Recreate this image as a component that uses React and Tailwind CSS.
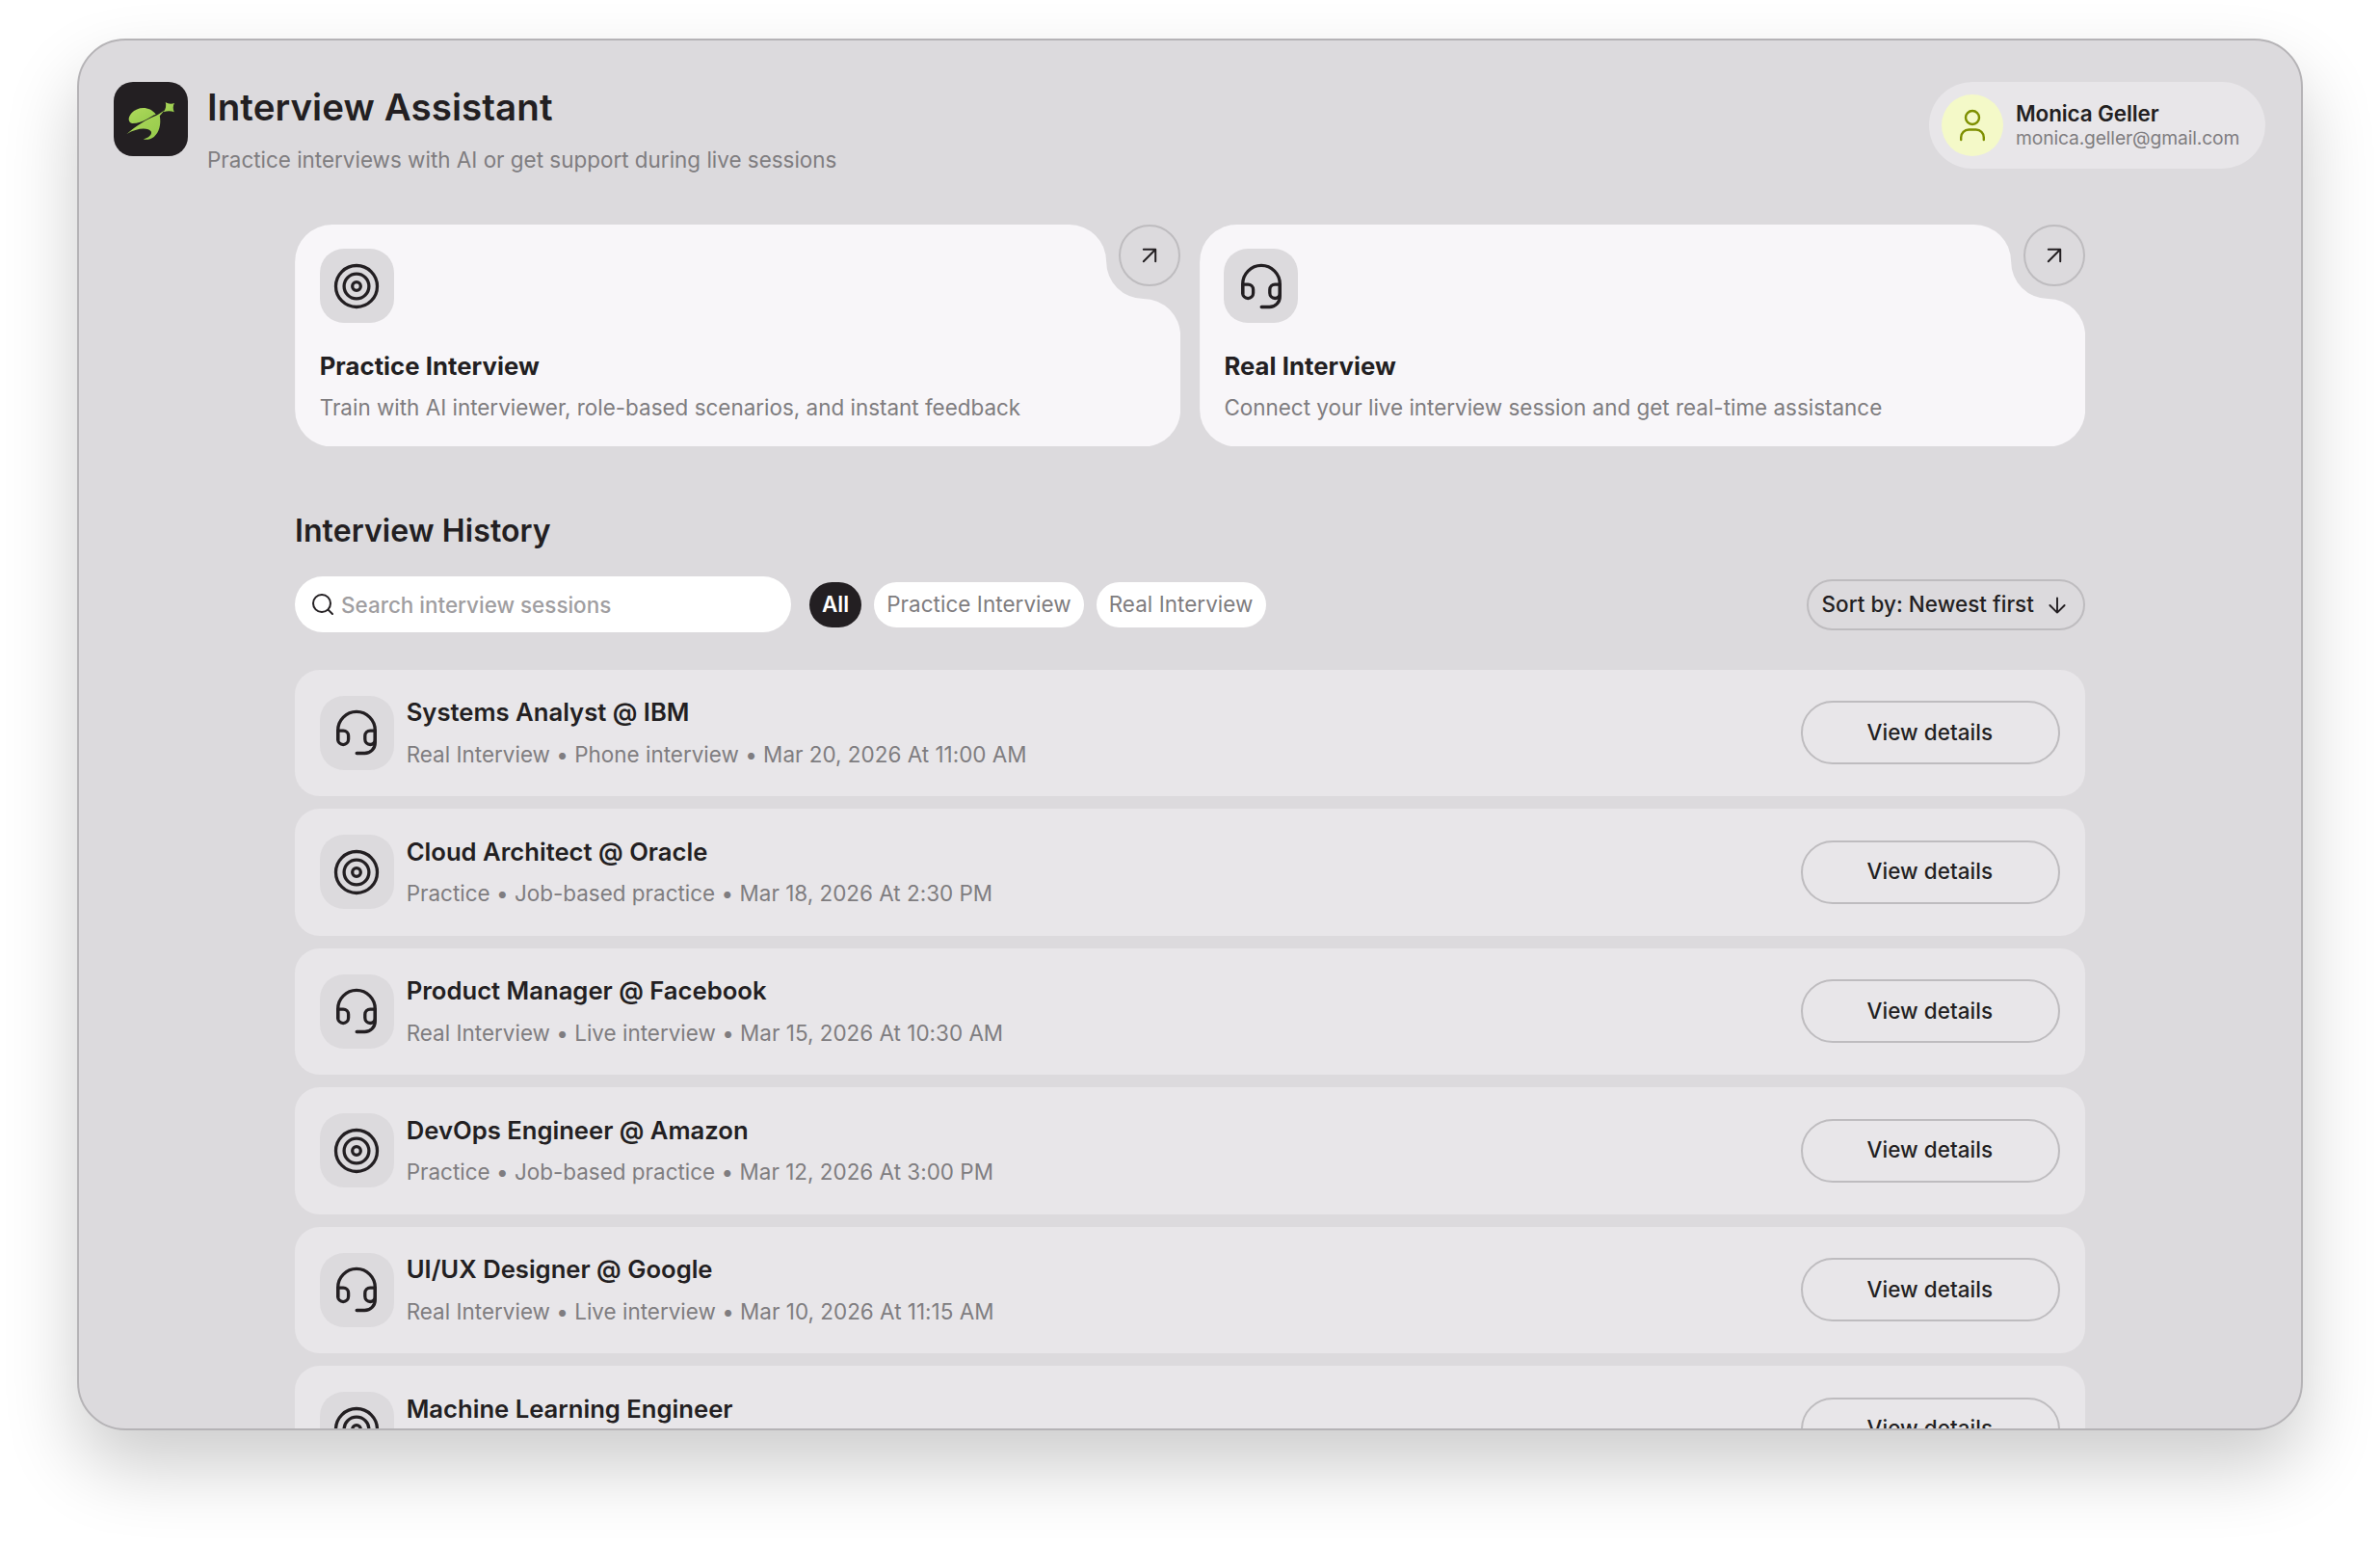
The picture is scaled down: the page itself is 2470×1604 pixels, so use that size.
import React from 'react'
import clsx from 'clsx'

const sessions = [
  { type: 'real', title: 'Systems Analyst @ IBM', meta: 'Real Interview • Phone interview • Mar 20, 2026 At 11:00 AM' },
  { type: 'practice', title: 'Cloud Architect @ Oracle', meta: 'Practice • Job-based practice • Mar 18, 2026 At 2:30 PM' },
  { type: 'real', title: 'Product Manager @ Facebook', meta: 'Real Interview • Live interview • Mar 15, 2026 At 10:30 AM' },
  { type: 'practice', title: 'DevOps Engineer @ Amazon', meta: 'Practice • Job-based practice • Mar 12, 2026 At 3:00 PM' },
  { type: 'real', title: 'UI/UX Designer @ Google', meta: 'Real Interview • Live interview • Mar 10, 2026 At 11:15 AM' },
  { type: 'practice', title: 'Machine Learning Engineer', meta: '' },
]

const filters = ['All', 'Practice Interview', 'Real Interview']

function Logo() {
  return (
    <div className="h-[77px] w-[77px] shrink-0 rounded-[20px] bg-[#231f22]">
      <svg viewBox="55 44 232 231" className="h-full w-full">
        <defs>
          <linearGradient id="logo" x1="0" y1="0" x2="1" y2="1">
            <stop offset="0" stopColor="#b0da5c" />
            <stop offset="1" stopColor="#93c94a" />
          </linearGradient>
        </defs>
        <g fill="url(#logo)">
          <path d="M113 173C99 171 99 154 111 141C129 121 166 117 187 145C168 150 150 173 113 173Z" />
          <path d="M96 206C124 182 160 159 187 149C197 145 206 138 214 131C210 137 205 143 199 150C204 176 197 203 181 215C171 223 158 225 148 223C164 219 176 208 172 199C164 184 126 187 96 206Z" />
          <path d="M217 107C224 112 235 113 245 110C240 118 240 128 244 138C234 134 222 134 211 138C218 128 220 117 217 107Z" />
        </g>
      </svg>
    </div>
  )
}

function TargetIcon() {
  return (
    <svg width="52" height="52" viewBox="0 0 52 52" fill="none" stroke="currentColor" strokeWidth="3.3">
      <circle cx="26" cy="26" r="21.5" />
      <circle cx="26" cy="26" r="12.9" />
      <circle cx="26" cy="26" r="4.3" />
    </svg>
  )
}

function HeadsetIcon() {
  return (
    <svg width="52" height="52" viewBox="0 0 52 52" fill="none" stroke="currentColor" strokeWidth="3.3" strokeLinecap="round" strokeLinejoin="round">
      <path d="M6.7 33.3V23.7a19.3 19.3 0 0 1 38.6 0v13a10.8 10.8 0 0 1-10.8 10.8H26.2" />
      <path d="M6.7 24.1h5.5a5.4 5.4 0 0 1 5.4 5.4v3.6a5.4 5.4 0 0 1-10.9 0z" />
      <path d="M45.3 24.1h-5.1a5.4 5.4 0 0 0-5.4 5.4v3.6a5.4 5.4 0 0 0 5.4 5.4c2.6 0 5.1-1.7 5.1-5.4z" />
    </svg>
  )
}

function IconBox({ type }) {
  return (
    <div className="flex h-[77px] w-[77px] shrink-0 items-center justify-center rounded-[25px] bg-[#dcdadd]">
      {type === 'real' ? <HeadsetIcon /> : <TargetIcon />}
    </div>
  )
}

function Header() {
  return (
    <header className="flex h-[190.5px] items-start justify-between pt-[43px] pr-[37px] pl-[36px]">
      <div className="flex gap-[20px]">
        <Logo />
        <div className="pt-[3px]">
          <h1 className="text-[38.5px] leading-[46px] font-semibold tracking-[0.07px]">Interview Assistant</h1>
          <p className="mt-[16px] text-[22.45px] leading-[32px] text-[#7f7d80]">
            Practice interviews with AI or get support during live sessions
          </p>
        </div>
      </div>

      <div className="flex h-[90px] w-[349px] items-center gap-[13px] rounded-full bg-[#e8e6e9] pl-[13px]">
        <div className="flex h-[64px] w-[64px] items-center justify-center rounded-full bg-[#f4f9c8] text-[#7e8f00]">
          <svg width="40" height="40" viewBox="0 0 40 40" fill="none" stroke="currentColor" strokeWidth="2.4" strokeLinecap="round">
            <circle cx="20" cy="12" r="7" />
            <path d="M8.2 35v-2.5a8 8 0 0 1 8-8h7.6a8 8 0 0 1 8 8V35" />
          </svg>
        </div>
        <div className="pb-[1px] whitespace-nowrap">
          <p className="text-[22.45px] leading-[27px] font-semibold tracking-[-0.1px]">Monica Geller</p>
          <p className="text-[19.25px] leading-[24px] tracking-[-0.13px] text-[#7f7d80]">monica.geller@gmail.com</p>
        </div>
      </div>
    </header>
  )
}

function ModeCard({ type, title, text }) {
  return (
    <div className="relative h-[230.5px] w-[919.3px] p-[25.7px]">
      {/* card shape with the notch around the round button */}
      <svg className="absolute inset-0 h-full w-full" viewBox="0 0 919 230.5" fill="#f8f6f9">
        <path d="M38.5 0H803.5A38.5 38.5 0 0 1 842 38.5A38.5 38.5 0 0 0 880.5 77A38.5 38.5 0 0 1 919 115.5V192A38.5 38.5 0 0 1 880.5 230.5H38.5A38.5 38.5 0 0 1 0 192V38.5A38.5 38.5 0 0 1 38.5 0Z" />
      </svg>
      <button className="absolute top-0 right-0 flex h-[64px] w-[64px] items-center justify-center rounded-full border-2 border-[#bebcbf]">
        <svg width="20" height="20" viewBox="0 0 20 20" fill="none" stroke="currentColor" strokeWidth="2" strokeLinecap="round" strokeLinejoin="round">
          <path d="M3.8 16.2 16.2 3.8M3.8 3.8h12.4v12.4" />
        </svg>
      </button>
      <div className="relative">
        <IconBox type={type} />
        <h2 className="mt-[29px] text-[25.66px] leading-[32px] font-bold tracking-[0.06px]">{title}</h2>
        <p className="mt-[11px] text-[22.45px] leading-[32px] text-[#7f7d80]">{text}</p>
      </div>
    </div>
  )
}

function Toolbar() {
  return (
    <div className="mt-[27.5px] flex h-[58px] items-center">
      <div className="flex h-full w-[515px] items-center rounded-full bg-white pl-[16px]">
        <svg width="26" height="26" viewBox="0 0 26 26" fill="none" stroke="currentColor" strokeWidth="2" strokeLinecap="round">
          <circle cx="12" cy="12" r="9" />
          <path d="m18.6 18.6 4.4 4.4" />
        </svg>
        <span className="ml-[6px] pt-[2px] text-[22.45px] leading-[32px] font-medium text-[#a09ea1]">Search interview sessions</span>
      </div>

      <div className="ml-[19px] flex gap-[13px]">
        {filters.map((name, i) => (
          <button
            key={name}
            className={clsx(
              'h-[47px] rounded-full px-[13px] pb-[1px] text-[22.45px] leading-[32px] tracking-[0.05px]',
              i === 0 ? 'bg-[#231f22] font-semibold text-white' : 'bg-white text-[#7f7d80]'
            )}
          >
            {name}
          </button>
        ))}
      </div>

      <button className="ml-auto flex h-[53px] w-[289.5px] items-center rounded-full border-2 border-[#bebcbf] pb-[1px] pl-[14px] text-[22.45px] leading-[32px] font-medium tracking-[0.05px]">
        Sort by: Newest first
        <svg className="mt-[2px] ml-[13px]" width="22" height="22" viewBox="0 0 22 22" fill="none" stroke="currentColor" strokeWidth="1.9" strokeLinecap="round" strokeLinejoin="round">
          <path d="M11 3.4v15.2M3.4 11l7.6 7.6 7.6-7.6" />
        </svg>
      </button>
    </div>
  )
}

function SessionRow({ session }) {
  return (
    <div className="flex h-[131.5px] shrink-0 items-center rounded-[25.7px] bg-[#e8e6e9] px-[25.7px]">
      <IconBox type={session.type} />
      <div className="ml-[13px] pt-[1px]">
        <h3 className="text-[25.66px] leading-[32px] font-semibold tracking-[-0.01px]">{session.title}</h3>
        <p className="mt-[11.5px] h-[32px] text-[22.45px] leading-[32px] tracking-[0.01px] text-[#7f7d80]">{session.meta}</p>
      </div>
      <button className="ml-auto h-[66px] w-[269px] rounded-full border-2 border-[#bebcbf] pr-[2px] pb-[1px] text-[22.45px] font-medium tracking-[0.05px]">
        View details
      </button>
    </div>
  )
}

export default function App() {
  return (
    <div className="h-[1604px] w-[2470px] overflow-hidden bg-white pt-[40px] pl-[80px] font-['Inter',sans-serif] text-[#231f22]">
      <div className="h-[1444px] w-[2310px] overflow-hidden rounded-[50px] border-2 border-[#b5b3b6] bg-[#dcdadd] shadow-[0_38px_77px_rgba(0,0,0,0.2)]">
        <Header />
        <main className="ml-[224px] w-[1858px]">
          <div className="flex justify-between">
            <ModeCard
              type="practice"
              title="Practice Interview"
              text="Train with AI interviewer, role-based scenarios, and instant feedback"
            />
            <ModeCard
              type="real"
              title="Real Interview"
              text="Connect your live interview session and get real-time assistance"
            />
          </div>

          <h2 className="mt-[67.5px] text-[32px] leading-[40px] font-semibold tracking-[0.08px]">Interview History</h2>
          <Toolbar />

          <div className="mt-[38.5px] flex flex-col gap-[13px]">
            {sessions.map((session) => (
              <SessionRow key={session.title} session={session} />
            ))}
          </div>
        </main>
      </div>
    </div>
  )
}
